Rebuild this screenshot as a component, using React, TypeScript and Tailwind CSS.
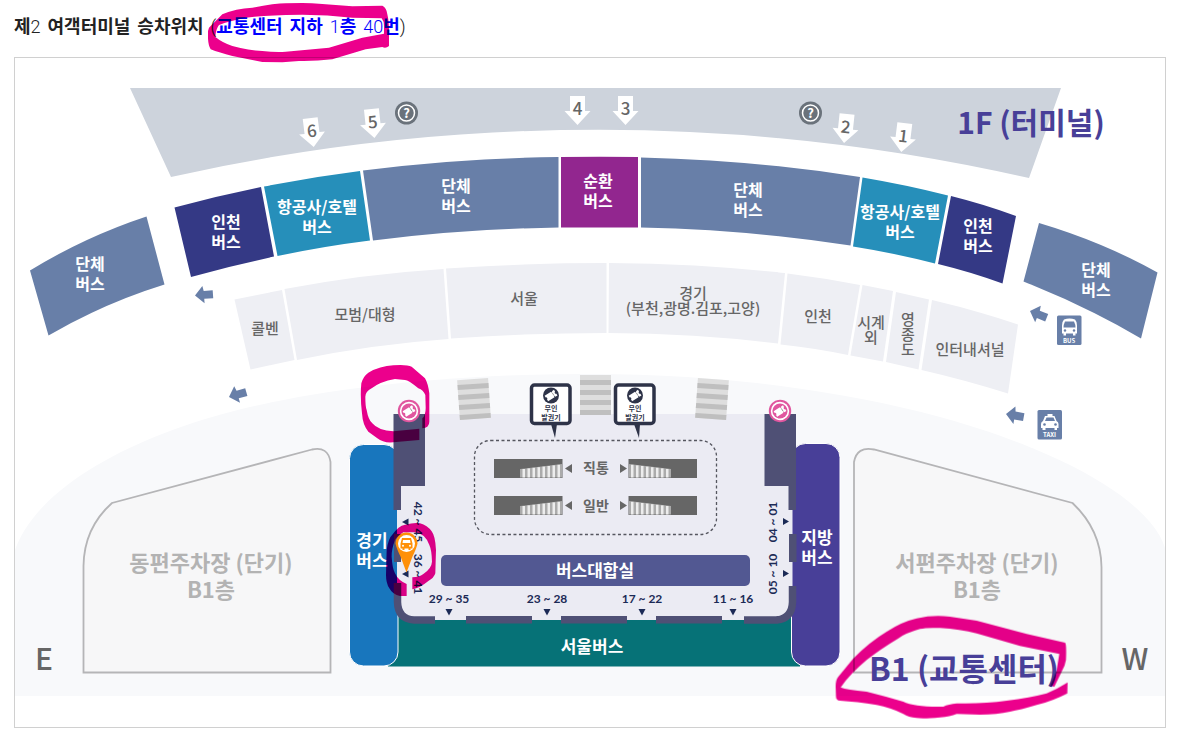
import type { ReactNode } from "react";

type LabelProps = {
  x: number;
  y: number;
  lines: string[];
  gap?: number;
  className?: string;
};

/* Centred map label; y is the baseline of the first line. */
function Label({ x, y, lines, gap = 20, className = "fill-white text-[16px] font-bold" }: LabelProps) {
  return (
    <text textAnchor="middle" className={className}>
      {lines.map((line, i) => (
        <tspan key={line} x={x} y={y + i * gap}>
          {line}
        </tspan>
      ))}
    </text>
  );
}

const GREY = "fill-[#666666] text-[15px] font-medium";
const NUMBER = "fill-[#1b2a56] font-['Lato','Noto_Sans_CJK_KR',sans-serif] text-[12px] font-bold";

const busBays = [
  { d: "M30 270.5A560 560 0 0 1 146.5 216.5L164.5 284.5A560 560 0 0 0 48.5 335.5Z", fill: "#687fa8" },
  { d: "M174.5 207.5Q217 196 261 187L274 256.5Q232 265.5 191 277Z", fill: "#343985" },
  { d: "M264 186.5Q312 177 360 171L370 240.5Q322 246.500 277.500 256Z", fill: "#268fba" },
  { d: "M363 170.500Q460 158 558.500 157V227.500Q465 229 373 240.500Z", fill: "#687fa8" },
  { d: "M561 157Q600 156.500 638 157V227.500H561Z", fill: "#92268f" },
  { d: "M641 157.500Q752 160 860 177L850.500 245.500Q746 229.500 641 227.500Z", fill: "#687fa8" },
  { d: "M862.500 177.500Q907 185 948 195.500L935 263.500Q894 253 853 246.500Z", fill: "#268fba" },
  { d: "M951 196Q985 204.500 1016 216L1002.500 283.500Q971 272 938 264Z", fill: "#343985" },
  { d: "M1039 223Q1103 242 1157.500 272.500L1141 338.500Q1086 306 1023.500 281.500Z", fill: "#687fa8" },
];

const taxiBays = [
  "M234.5 299.500L282 290L294.500 360L250.500 369.500Z",
  "M284.500 289Q364 274 443.500 269L448.500 339Q371 344.500 297 360Z",
  "M446 268.500Q526 263 606.500 263V333Q528 333 451 338.500Z",
  "M609 263Q698 263.500 785 273L778 343.500Q693 333 608.500 333Z",
  "M787.500 273.500Q824 278 860 285L848 355Q814 348 780.500 344.500Z",
  "M862.500 285L893 291L883 361.500L850.500 355.500Z",
  "M896 292L929 299.500L918.500 369.500L886 362Z",
  "M932 300Q975 310 1018 324.500L1008 393.500Q965 380 921.500 370Z",
];

function GateArrow({ x, y, turn, label }: { x: number; y: number; turn: number; label: string }) {
  return (
    <g transform={`translate(${x} ${y}) rotate(${turn})`}>
      <path d="M-7.500-15H7.500V0H13L0 14L-13 0H-7.500Z" fill="#fff" />
      <text y="4" textAnchor="middle" className="fill-[#666666] text-[17px] font-medium">
        {label}
      </text>
    </g>
  );
}

function LaneArrow({ x, y, turn }: { x: number; y: number; turn: number }) {
  return (
    <path
      transform={`translate(${x} ${y}) rotate(${turn})`}
      d="M0 0L8-9L9-4H18V4H9L9 8.500Z"
      fill="#687fa8"
    />
  );
}

function InfoMark({ x }: { x: number }) {
  return (
    <g transform={`translate(${x} 113)`}>
      <circle r="11.500" fill="#6a727b" />
      <circle r="8" fill="none" stroke="#fff" strokeWidth="1.500" />
      <text y="5" textAnchor="middle" className="fill-white text-[13px] font-bold">
        ?
      </text>
    </g>
  );
}

function TicketShape() {
  return (
    <g transform="rotate(-32)">
      <path d="M-5.500-3.200H2V-2.200H3V-3.200H5.500V-1.200A1.300 1.300 0 0 0 5.500 1.300V3.400H3V2.400H2V3.400H-5.500V1.300A1.300 1.300 0 0 0-5.500-1.200Z" fill="#fff" />
      <path d="M2.500-1.500V1.800" stroke="#777" strokeWidth=".7" />
    </g>
  );
}

function TicketOffice({ x }: { x: number }) {
  return (
    <g transform={`translate(${x} 411)`}>
      <circle r="11.200" fill="#e0569f" />
      <circle r="9.200" fill="#fff" />
      <circle r="7.600" fill="#e0569f" />
      <TicketShape />
    </g>
  );
}

function TicketMachine({ x, tail }: { x: number; tail: string }) {
  return (
    <g transform={`translate(${x} 383)`}>
      <path d={tail} fill="#2e3348" />
      <rect x="-19.500" y="2" width="38.500" height="38.500" rx="3" fill="#fff" stroke="#2e3348" strokeWidth="3.500" />
      <g transform="translate(0 12.500)">
        <circle r="8" fill="#2e3348" />
        <TicketShape />
      </g>
      <Label x={0} y={28} gap={9} lines={["무인", "발권기"]} className="fill-[#2e3348] text-[7px] font-bold" />
    </g>
  );
}

function Crossing({ x, y, turn }: { x: number; y: number; turn: number }) {
  return (
    <g transform={`translate(${x} ${y}) rotate(${turn})`}>
      <rect x="-15.500" y="-20" width="31" height="40" fill="#dedede" />
      {[-15, -5, 5, 15].map((top) => (
        <rect key={top} x="-15.500" y={top} width="31" height="5" fill="#bfbfbf" />
      ))}
    </g>
  );
}

/* Escalator with its steps rising towards the middle of the hall. */
function Escalator({ x, y, mirrored = false }: { x: number; y: number; mirrored?: boolean }) {
  return (
    <g transform={`translate(${x} ${y}) scale(${mirrored ? -1 : 1} 1)`}>
      <rect width="68.500" height="19" fill="#666" />
      <path d="M26 10L68 5V18.500H26Z" fill="#ababab" />
      {[0, 1, 2, 3, 4, 5, 6, 7].map((i) => (
        <path
          key={i}
          d={`M${28.5 + i * 5} ${10 - i * 0.6}h2.500V18.500h-2.500Z`}
          fill="#ededed"
        />
      ))}
    </g>
  );
}

function Sign({ x, y, label, children }: { x: number; y: number; label: string; children: ReactNode }) {
  return (
    <g transform={`translate(${x} ${y})`}>
      <rect width="24.500" height="29.500" rx="1.500" fill="#687fa8" />
      {children}
      <text x="12" y="27" textAnchor="middle" className="fill-white text-[6px] font-bold">
        {label}
      </text>
    </g>
  );
}

function TerminalFloor() {
  return (
    <g>
      <path d="M130 88H1061L1029 178A1950 1950 0 0 0 171 177Z" fill="#cdd3dc" />
      {busBays.map((bay) => (
        <path key={bay.d} d={bay.d} fill={bay.fill} />
      ))}
      {taxiBays.map((d) => (
        <path key={d} d={d} fill="#eeeff4" />
      ))}

      <GateArrow x={312} y={133} turn={-7} label="6" />
      <GateArrow x={373} y={124} turn={-6} label="5" />
      <GateArrow x={577.5} y={111} turn={0} label="4" />
      <GateArrow x={625.5} y={111} turn={0} label="3" />
      <GateArrow x={845.5} y={129} turn={6} label="2" />
      <GateArrow x={903} y={138} turn={7} label="1" />
      <InfoMark x={406.5} />
      <InfoMark x={810.5} />

      <Label x={90} y={270} lines={["단체", "버스"]} />
      <Label x={226} y={228} lines={["인천", "버스"]} />
      <Label x={317} y={213} lines={["항공사/호텔", "버스"]} />
      <Label x={456} y={192} lines={["단체", "버스"]} />
      <Label x={598} y={187} lines={["순환", "버스"]} />
      <Label x={748} y={196} lines={["단체", "버스"]} />
      <Label x={900} y={218} lines={["항공사/호텔", "버스"]} />
      <Label x={978} y={232} lines={["인천", "버스"]} />
      <Label x={1096} y={276} lines={["단체", "버스"]} />

      <Label x={265} y={334} lines={["콜벤"]} className={GREY} />
      <Label x={365} y={320} lines={["모범/대형"]} className={GREY} />
      <Label x={524} y={304} lines={["서울"]} className={GREY} />
      <Label x={693} y={299} gap={15} lines={["경기", "(부천,광명.김포,고양)"]} className={GREY} />
      <Label x={818} y={322} lines={["인천"]} className={GREY} />
      <Label x={871} y={328} gap={15} lines={["시계", "외"]} className={GREY} />
      <Label x={908} y={325} gap={15} lines={["영", "종", "도"]} className={GREY} />
      <Label x={970} y={355} lines={["인터내셔널"]} className={GREY} />

      <LaneArrow x={195} y={295.5} turn={-4} />
      <LaneArrow x={229} y={397} turn={-16} />
      <LaneArrow x={1030} y={311} turn={22} />
      <LaneArrow x={1006} y={414} turn={10} />

      <Sign x={1057} y={315.5} label="BUS">
        <path d="M7 4Q12.500 2 18 4Q20 6 20 10V18H18.500V20H16V18H9V20H6.500V18H5V10Q5 6 7 4Z" fill="#fff" />
        <path d="M8 6H17Q18.500 9 18.500 12H6.500Q6.500 9 8 6Z" fill="#687fa8" />
        <circle cx="8" cy="15" r="1.200" fill="#687fa8" />
        <circle cx="17" cy="15" r="1.200" fill="#687fa8" />
      </Sign>
      <Sign x={1037.5} y={410} label="TAXI">
        <path d="M10 4H15V6H17L19 11Q21 12 21 14V18H19.500V20H17V18H8V20H5V18H3.500V14Q3.500 12 5.500 11L7.500 6H10Z" fill="#fff" />
        <path d="M9 7.500H16L17.500 11H7.500Z" fill="#687fa8" />
        <circle cx="7" cy="14.500" r="1.300" fill="#687fa8" />
        <circle cx="18" cy="14.500" r="1.300" fill="#687fa8" />
      </Sign>

      <Label x={1031} y={134} lines={["1F (터미널)"]} className="fill-[#483f98] text-[30px] font-bold" />
    </g>
  );
}

function ParkingLots() {
  const lot = "fill-[#b3b3b3] text-[22px] font-bold";
  return (
    <g>
      <g fill="#f7f7f8" stroke="#b5b5b7" strokeWidth="1.800">
        <path d="M83.500 672.500V566Q84 528 112 503L312 449.500Q328 446 330.500 462V672.500Z" />
        <path d="M854 672.500V462Q857 446 874 449.500L1072.500 503Q1101 530 1101.500 567V672.500Z" />
      </g>
      <Label x={211} y={571} gap={27} lines={["동편주차장 (단기)", "B1층"]} className={lot} />
      <Label x={977} y={571} gap={27} lines={["서편주차장 (단기)", "B1층"]} className={lot} />
      <Label x={44} y={670} lines={["E"]} className="fill-[#666666] text-[30px] font-medium" />
      <Label x={1135} y={670} lines={["W"]} className="fill-[#666666] text-[30px] font-medium" />
    </g>
  );
}

function TransportCenter() {
  const big = "fill-white text-[17px] font-bold";
  return (
    <g>
      <path
        d="M15 550C40 480 150 430 250 407C350 384 470 374 590 374C720 374 840 390 940 417C1060 450 1150 500 1165 548V696H15Z"
        fill="#f8f9fb"
      />
      <ParkingLots />

      <path d="M388 612H800V666.500H388Z" fill="#067277" />
      <rect x="349.500" y="444.500" width="48.500" height="221.500" rx="14" fill="#1876bd" stroke="#fff" />
      <rect x="791.500" y="443.500" width="48.500" height="222.500" rx="14" fill="#483f98" stroke="#fff" />

      <path d="M397 414H792.500V604Q792.500 620 776 620H414Q397 620 397 604Z" fill="#ebebf3" />
      <g fill="#4f5075">
        <path d="M393.500 414H425V486H401V510H393.500Z" />
        <path d="M764.500 414H796V510H788.500V486H764.500Z" />
        <path d="M394 534H401V562H394Z" />
        <path d="M789 534H796.500V562H789Z" />
        <path d="M466 616H532V623.500H466Z" />
        <path d="M561 616H627V623.500H561Z" />
        <path d="M656 616H722V623.500H656Z" />
      </g>
      <g fill="none" stroke="#4f5075" strokeWidth="7.500">
        <path d="M397.500 583V602Q398 619 414 620H435" />
        <path d="M792.500 586V602Q792 619 776 620H744" />
      </g>

      <Crossing x={474} y={399} turn={-4} />
      <Crossing x={595.5} y={395} turn={0} />
      <Crossing x={712} y={399} turn={4} />
      <TicketMachine x={551} tail="M0 41H6L4 55Z" />
      <TicketMachine x={635} tail="M-1 41H5L4 55Z" />

      <rect x="474.500" y="440.500" width="242" height="94" rx="16" fill="none" stroke="#55565f" strokeWidth="1.300" strokeDasharray="3 2.500" />
      {[459, 496].map((y) => (
        <g key={y}>
          <Escalator x={494} y={y} />
          <Escalator x={697} y={y} mirrored />
          <path d={`M565 ${y + 9.5}l7-4.500v9Z`} fill="#666" />
          <path d={`M627 ${y + 9.5}l-7-4.500v9Z`} fill="#666" />
        </g>
      ))}
      <Label x={596} y={473} gap={38} lines={["직통", "일반"]} className="fill-[#666666] text-[14px] font-bold" />

      <rect x="441" y="555" width="309" height="31" rx="5" fill="#525892" />
      <Label x={595} y={577} lines={["버스대합실"]} className={big} />
      <Label x={592} y={653} lines={["서울버스"]} className={big} />
      <Label x={372} y={547} lines={["경기", "버스"]} className={big} />
      <Label x={817} y={544} lines={["지방", "버스"]} className={big} />

      {[
        { x: 449, text: "29 ~ 35" },
        { x: 547, text: "23 ~ 28" },
        { x: 642, text: "17 ~ 22" },
        { x: 733, text: "11 ~ 16" },
      ].map((gate) => (
        <g key={gate.x}>
          <Label x={gate.x} y={603} lines={[gate.text]} className={NUMBER} />
          <path d={`M${gate.x - 3.5} 609h7l-3.500 6.500Z`} fill="#1b2a56" />
        </g>
      ))}
      {[
        { y: 522, left: "42 ~ 45", right: "04 ~ 01" },
        { y: 574, left: "36 ~ 41", right: "05 ~ 10" },
      ].map((gate) => (
        <g key={gate.y}>
          <g transform={`translate(414 ${gate.y}) rotate(90)`}>
            <Label x={0} y={0} lines={[gate.left]} className={NUMBER} />
          </g>
          <g transform={`translate(777 ${gate.y}) rotate(-90)`}>
            <Label x={0} y={0} lines={[gate.right]} className={NUMBER} />
          </g>
          <path d={`M402 ${gate.y}l6.500-3.500v7Z`} fill="#1b2a56" />
          <path d={`M789 ${gate.y - 0.5}l-6-3.500v7Z`} fill="#1b2a56" />
        </g>
      ))}

      <TicketOffice x={409} />
      <TicketOffice x={780} />

      <g transform="translate(406.500 543.500)">
        <path d="M-11 0A11 11 0 0 1 11 0Q10 5 6 13L0 29L-6 13Q-10 5-11 0Z" fill="#ff9008" />
        <circle r="8.500" fill="#fff" />
        <path d="M-4.500-5.500H4.500L6 0V5H4V6.500H2V5H-2V6.500H-4V5H-6V0Z" fill="#ff9008" />
        <path d="M-3.500-3.500H3.500L4-.500H-4Z" fill="#fff" />
        <circle cx="-3.500" cy="2.200" r="1" fill="#fff" />
        <circle cx="3.500" cy="2.200" r="1" fill="#fff" />
      </g>

      <Label x={964} y={681} lines={["B1 (교통센터)"]} className="fill-[#483f98] text-[32px] font-bold" />
    </g>
  );
}

/* Felt-pen marks; multiplied so that the map shows through the ink. */
function MapInk() {
  return (
    <g fill="#ec008c" className="mix-blend-multiply">
      <path
        transform="translate(340 360) scale(.3333)"
        d="M64 70Q70 48 85 38Q120 18 160 16Q200 13 215 20L255 55Q264 70 268 100V185Q268 203 247 205V175Q258 165 257 140L256 105Q250 90 235 85Q205 60 195 60L165 57Q120 65 95 85Q76 95 76 110Q76 140 80 150Q85 180 97 190Q115 212 160 214L238 206V240L160 247Q130 250 112 235L85 215Q68 195 66 160Q60 110 64 70Z"
      />
      <path
        transform="translate(340 500) scale(.3333)"
        d="M200 288H180Q158 284 148 265Q138 250 138 225L140 150Q145 115 158 103Q175 78 195 74Q225 66 240 70Q262 76 275 94Q286 108 288 150L286 220Q282 234 265 243Q240 264 217 268V232Q237 232 250 222Q275 205 276 185Q275 150 268 135Q255 100 225 97H190Q170 110 165 120Q154 150 155 170Q157 205 165 220Q175 242 200 252Z"
      />
      <path
        transform="translate(820 430) scale(.3333)"
        d="M47 770Q47 748 55 740L100 685Q150 635 200 605Q245 575 290 565Q340 554 390 560L470 572L620 612L735 638Q740 640 738 690Q735 710 725 725L703 770L690 768Q705 735 710 720L718 672L600 648L470 610Q420 598 360 594Q320 592 300 597Q255 610 235 625Q180 658 140 690Q90 732 62 772Q80 779 140 785Q200 800 250 815Q285 832 370 830Q385 822 410 820Q490 822 560 812Q630 803 680 790Q715 775 743 757L742 790Q700 812 650 825Q600 840 570 845Q530 854 480 854L410 852Q390 860 360 862Q310 867 290 864Q265 862 250 852Q210 832 170 825Q110 815 60 812Q48 811 48 800Z"
      />
    </g>
  );
}

export default function App() {
  return (
    <main className="bg-white pr-3 pb-3 pl-3.5 font-['Noto_Sans_CJK_KR',sans-serif]">
      <h1 className="flex h-[57px] items-center pb-1 font-['Roboto','Noto_Sans_CJK_KR',sans-serif] text-[18px] leading-6 font-bold text-[#222222]">
        <span className="relative flex gap-[7px] whitespace-nowrap">
          <span>
            제<span className="font-light">2</span>
          </span>
          <span>여객터미널</span>
          <span>승차위치</span>
          <span>
            <span className="font-light">(</span>
            <span className="text-[#0000ff]">교통센터</span>
          </span>
          <span className="text-[#0000ff]">지하</span>
          <span className="text-[#0000ff]">
            <span className="font-light">1</span>층
          </span>
          <span>
            <span className="text-[#0000ff]">
              <span className="font-light">40</span>번
            </span>
            <span className="font-light">)</span>
          </span>
          <svg
            viewBox="627 0 546 190"
            aria-hidden="true"
            className="pointer-events-none absolute -top-3.5 right-4 z-10 w-[182px] mix-blend-multiply"
          >
            <path
              fillRule="evenodd"
              fill="#ec008c"
              d="M627 90Q629 78 635 75L670 40Q710 22 760 20Q830 7 860 7Q930 5 960 8L1060 16L1150 14Q1163 20 1165 40Q1170 60 1170 90V135Q1160 144 1150 138L1100 145L1000 175Q950 181 900 180L850 184L790 183L700 165Q660 155 635 145Q625 130 627 90ZM660 72Q650 85 649 108Q670 125 700 135Q750 148 790 150Q830 154 860 152L990 140L1090 110L1155 98V75Q1155 60 1148 52L1060 50Q960 38 860 42Q790 44 740 50Q690 60 660 72Z"
            />
          </svg>
        </span>
      </h1>
      <figure className="border border-[#d0d0d0]">
        <svg viewBox="15 58 1150 669" role="img" aria-label="제2 여객터미널 승차위치" className="isolate block h-auto w-full">
          <rect x="15" y="58" width="1150" height="669" fill="#fff" />
          <TransportCenter />
          <TerminalFloor />
          <MapInk />
        </svg>
      </figure>
    </main>
  );
}
